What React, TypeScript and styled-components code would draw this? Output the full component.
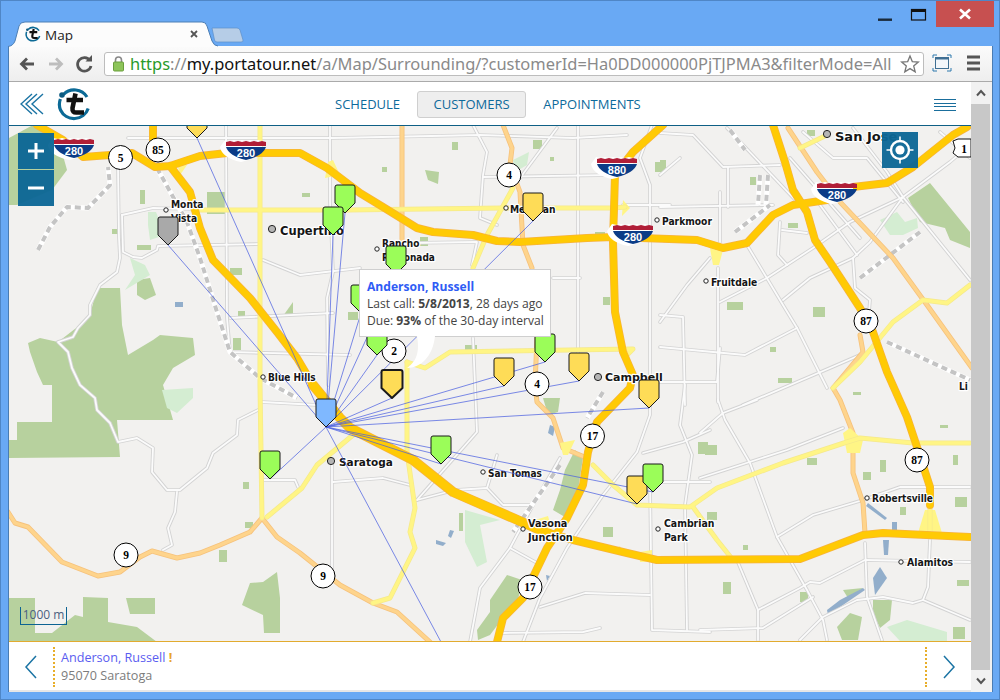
import React from "react";
import styled, { createGlobalStyle } from "styled-components";

const Global = createGlobalStyle`
  html, body { margin: 0; padding: 0; background: #69a9f4; }
  body { width: 1000px; height: 700px; overflow: hidden; font-family: "Open Sans", "Liberation Sans", sans-serif; }
`;

const Win = styled.div`
  width: 1000px; height: 700px; box-sizing: border-box; background: #69a9f4;
  border: 1px solid #4f86c6; display: flex; flex-direction: column; position: relative;
  padding: 0 6px 7px 7px;
`;
const TabStrip = styled.div`
  height: 45px; flex: none; display: flex; align-items: flex-end; position: relative;
`;
const TabShape = styled.svg`width: 245px; height: 26px; display: block; flex: none; margin-bottom: -1px;`;
const TabLabel = styled.text`font: 13.5px "Open Sans", sans-serif; fill: #222;`;

const Browser = styled.div`
  flex: 1; min-height: 0; display: flex; flex-direction: column; background: #fff;
  border-left: 1px solid #4a7cb3; border-right: 1px solid #4a7cb3;
`;
const Toolbar = styled.div`
  height: 36px; box-sizing: border-box; flex: none; display: flex; align-items: center;
  background: linear-gradient(#fbfbfb, #eeeeee); border-bottom: 1px solid #aaa; padding: 0 9px 0 7px;
`;
const NavIcons = styled.svg`width: 88px; height: 24px; flex: none; display: block;`;
const Omnibox = styled.div`
  flex: none; width: 820px; height: 24px; box-sizing: border-box; background: #fff;
  border: 1px solid #bdbdbd; border-radius: 3px; display: flex; align-items: center; padding: 0 3px 0 7px; gap: 5px;
`;
const Lock = styled.svg`width: 13px; height: 17px; flex: none; display: block;`;
const Url = styled.div`
  flex: 1; min-width: 0; font: 16.45px/22px "Noto Sans", sans-serif; white-space: nowrap; overflow: hidden; color: #8a8a8a;
`;
const Scheme = styled.span`color: #2a9a2a;`;
const Host = styled.span`color: #111;`;
const StarIcon = styled.svg`width: 20px; height: 20px; flex: none; display: block;`;
const RightIcons = styled.svg`width: 50px; height: 22px; flex: none; display: block; margin-left: 8px;`;

const PageRow = styled.div`flex: 1; min-height: 0; display: flex;`;
const Content = styled.div`flex: 1; min-width: 0; display: flex; flex-direction: column;`;
const Header = styled.header`
  height: 44px; box-sizing: border-box; flex: none; background: #fff; border-bottom: 1px solid #0e5f85;
  display: flex; align-items: center; position: relative; padding-left: 11px;
`;
const BackChevrons = styled.svg`width: 24px; height: 24px; flex: none; display: block;`;
const Logo = styled.svg`width: 34px; height: 34px; flex: none; display: block; margin-left: 13px;`;
const Nav = styled.nav`
  display: flex; align-items: center; gap: 17px; margin: 1px 0 0 244px; flex: none;
`;
const NavItem = styled.a<{ $on?: boolean }>`
  font: 13px/25px "Open Sans", sans-serif; color: #0d6a9b; height: 25px;
  padding: 0 ${(p) => (p.$on ? "15.5px" : "0")};
  ${(p) => p.$on && "background:#eeeeee; border:1px solid #cfcfcf; border-radius:3px;"}
`;
const Burger = styled.div`
  position: absolute; right: 15px; top: 17px; width: 22px; height: 12px;
  display: flex; flex-direction: column; justify-content: space-between;
`;
const BurgerLine = styled.span`height: 1.4px; background: #1a6e9c; display: block;`;

const MapCanvas = styled.div`flex: 1; min-height: 0; position: relative; overflow: hidden; background: #f2f1ef;`;
const MapArt = styled.svg`display: block; width: 962px; height: 515px;`;
const Park = styled.polygon`fill: #b7d19e;`;
const Pale = styled.polygon`fill: #d4edd2;`;
const Water = styled.polygon`fill: #92aecb;`;
const Interchange = styled.polygon`fill: #fff585;`;
const Lawn = styled.rect`fill: #b7d19e;`;
const Casing = styled.polyline<{ $c: string; $w: number }>`
  fill: none; stroke: ${(p) => p.$c}; stroke-width: ${(p) => p.$w}; stroke-linejoin: round; stroke-linecap: round;
`;
const Rail = styled.polyline<{ $dash?: boolean }>`
  fill: none; stroke: ${(p) => (p.$dash ? "#c4c4c4" : "#fff")}; stroke-width: ${(p) => (p.$dash ? 4 : 5)};
  ${(p) => p.$dash && "stroke-dasharray: 6 4;"} stroke-linejoin: round;
`;
const PlaceLabel = styled.text<{ $s: number; $wide?: boolean }>`
  font: 700 ${(p) => p.$s}px ${(p) => (p.$wide ? '"DejaVu Sans"' : '"DejaVu Sans Condensed", "DejaVu Sans"')}, sans-serif; fill: #151515;
  paint-order: stroke; stroke: #fff; stroke-width: 2.4px; stroke-linejoin: round;
`;
const PlaceDot = styled.circle<{ $big?: boolean }>`
  fill: ${(p) => (p.$big ? "#b5b5b5" : "#fff")}; stroke: #222; stroke-width: 1;
`;
const Link = styled.line`stroke: #4a5ee0; stroke-opacity: .72; stroke-width: 1;`;
const BadgeCircle = styled.circle`fill: #fff; stroke: #000; stroke-width: 1;`;
const BadgeText = styled.text`font: 700 11.5px "Liberation Serif", serif; text-anchor: middle; fill: #000;`;
const ShieldText = styled.text`font: 700 11px "Liberation Sans", sans-serif; text-anchor: middle; fill: #fff;`;
const PinPath = styled.path<{ $fill: string; $sel?: boolean }>`
  fill: ${(p) => p.$fill}; stroke: #1a1a1a; stroke-width: ${(p) => (p.$sel ? 2 : 1)}; stroke-linejoin: round;
`;

const ZoomBox = styled.div`
  position: absolute; left: 9px; top: 7px; width: 36px; display: flex; flex-direction: column; gap: 1px;
`;
const ZoomBtn = styled.div`
  width: 36px; height: 36px; background: rgba(13, 103, 150, .96); color: #fff; display: flex; align-items: center; justify-content: center;
`;
const ZoomGlyph = styled.svg`width: 20px; height: 20px; display: block;`;
const LocateBtn = styled(ZoomBtn)`position: absolute; left: 873px; top: 6px;`;
const LocateGlyph = styled.svg`width: 30px; height: 30px; display: block;`;
const Scale = styled.div`
  position: absolute; left: 11px; top: 481px; width: 45px; height: 17px; border: 1.5px solid #0d6393; border-top: none;
  font: 12px/15px "Open Sans", sans-serif; color: #4b5f80; text-align: center; white-space: nowrap;
`;
const Popup = styled.div`
  position: absolute; left: 350px; top: 143px; width: 192px; height: 68px; box-sizing: border-box; background: #fff;
  border: 1px solid #cfcfcf; padding: 8px 0 0 7px; font: 12.1px/17px "Open Sans", sans-serif; color: #444; white-space: nowrap;
`;
const PopupTitle = styled.div`font-weight: 700; color: #2f5cf5;`;
const PopupTail = styled.svg`position: absolute; left: 45px; top: 66px; width: 40px; height: 36px; display: block;`;
const TailPath = styled.path`fill: #fff;`;

const Footer = styled.footer`
  height: 51px; box-sizing: border-box; flex: none; background: #fff; border-top: 1px solid #e2ab2f; border-bottom: 2px solid #e6e6e6;
  display: flex; align-items: center; padding-top: 1px;
`;
const Arrow = styled.svg`width: 44px; height: 26px; flex: none; display: block;`;
const Divider = styled.div`width: 0; height: 40px; border-left: 2px dotted #e8ae2a; flex: none;`;
const CustomerInfo = styled.div`flex: 1; padding-left: 6px; font: 12.6px/18px "Open Sans", sans-serif; color: #7c7c7c; min-width: 0;`;
const CustomerName = styled.div`color: #5a5cf0;`;
const Bang = styled.span`color: #e8a52a; font-weight: 700;`;

const Scrollbar = styled.div`width: 21px; flex: none; background: #f1f1f1; display: flex; flex-direction: column;`;
const ScrollEnd = styled.div`height: 22px; flex: none; display: flex; align-items: center; justify-content: center; padding-right: 2px;`;
const ScrollThumb = styled.div`flex: 1; background: #c8c8c8; margin-right: 2px;`;
const ScrollArrow = styled.svg`width: 12px; height: 10px; display: block;`;

const ButtonsWrap = styled.div`position: absolute; top: 0; right: 4px; display: flex; align-items: flex-start;`;
const ButtonsGlyph = styled.svg`width: 117px; height: 27px; display: block;`;

const MOTOR = [
  "37,125 63,140 83,157 110,155 132,153 155,167 170,166 200,156 227,153 300,153 327,168 360,193 383,207 417,228 433,232 473,235 497,241 520,242 587,238 613,237 697,240 723,248 747,243 773,215 793,205 827,200 853,187 887,183 913,167 953,135 967,127",
  "170,166 190,192 200,228 213,260 250,298 277,332 297,358 313,385 340,418 350,428 413,460 453,492 513,518 540,530 573,540 627,553 657,560 800,559 863,535 883,533 970,537",
  "663,125 633,152 615,175 613,242 615,312 623,352 633,375 630,388 597,422 588,452 583,485 567,518 547,548 523,598 503,618 497,642",
  "773,125 785,162 793,190 807,212 815,240 830,262 847,288 860,308 873,332 887,372 907,417 917,447 930,487 930,505",
  "153,125 153,140 158,155",
];
const MOTOR_WIDE = "313,385 340,418 350,428 413,460 453,492 513,518 540,530";
const EXPRESS = [
  "402,125 402,240",
  "503,125 512,148 510,165 520,192 523,245 532,268",
  "537,338 535,385 537,402 553,418 563,448 587,458",
  "788,128 817,172 840,202 893,258 927,305 972,368",
  "860,335 863,352 833,388 840,400 853,433 853,473 863,503 865,533",
  "8,512 15,523 28,527 62,562 98,576 120,572 140,557 152,551 177,558 200,553 220,545 250,532 262,518 277,537 300,553 340,585 373,603 397,612 430,642",
];
const ARTERIAL = [
  "260,125 260,385 262,518",
  "193,210 347,210 503,208 613,208 625,207",
  "513,188 487,235 473,268",
  "407,362 407,452 415,508 410,532 415,548 390,598 373,603",
  "407,362 425,368 450,352 633,349 627,355",
  "267,517 302,488 317,465 353,435",
  "593,465 613,485 637,505 690,507 717,488 783,463 847,442 860,438 913,443 970,443",
  "693,507 717,540 733,560",
  "970,285 947,303 923,300 893,322 860,362 833,388",
  "827,135 800,148",
  "930,500 930,533",
];
const INTERCHANGES = [
  "710,248 723,250 719,265 713,265", "623,200 630,208 622,216", "177,163 187,165 180,175", "328,162 333,160 340,175 325,178",
  "843,433 850,428 863,440 860,453 847,453", "925,510 935,510 942,533 918,533", "560,443 575,440 568,455 563,455", "640,552 652,550 652,562 640,562",
  "535,520 548,516 552,530 540,530", "610,552 620,546 624,556",
];
const STREETS = [
  "118,168 119,238 120,258 117,272 100,285 90,305 90,315 78,328 73,337 58,342 68,352 72,368 80,385 95,398 97,410 110,423 118,442 137,438 153,448 152,472 167,490 180,490 207,468 213,453 237,435 238,420 258,410",
  "177,492 175,512 168,528 172,545 163,550",
  "122,215 153,208 193,209", "122,215 123,252 133,257 142,258 157,250 158,246 260,244",
  "128,138 333,138 480,135 573,138 627,135",
  "226,125 227,318 230,352 350,355", "230,318 333,313", "263,260 300,275 360,268",
  "330,125 330,202 333,272 327,298 328,385", "262,402 317,405", "263,480 295,480 298,487",
  "332,462 332,572", "333,482 383,478 410,485",
  "473,125 487,152 483,175 480,218 497,225", "483,177 613,175", "557,128 520,178", "578,125 578,372",
  "407,243 477,242 472,265", "553,278 580,278", "473,338 477,432 417,500", "417,500 455,490 487,488 503,505 533,505", "497,455 487,488",
  "652,125 640,158 650,185 650,415 637,452 603,495 567,548 540,598 523,642",
  "623,205 670,205", "560,458 533,505 510,548 480,588 470,642", "510,548 537,563",
  "650,482 652,630 710,632", "540,607 585,593 650,595", "685,385 680,425 692,455 685,505 687,630", "503,633 583,632 600,628", "643,453 683,442 710,430", "650,482 710,482",
  "660,133 693,135 723,167 780,165", "728,167 728,207", "660,207 773,205", "720,192 720,242", "718,268 718,402",
  "660,315 683,317 685,405", "660,347 745,355 797,328", "660,382 717,382 720,348",
  "747,245 783,305 797,328 827,388", "720,302 767,278 813,248 850,222 903,197 950,162 970,145",
  "783,300 810,278 853,258 870,242 903,197 970,280", "853,258 855,288 870,300 868,325",
  "680,158 660,175", "727,128 800,205", "790,158 860,238", "820,205 857,255", "803,132 833,158 867,158 903,202", "853,128 887,172 903,197", "940,132 970,158",
  "660,322 687,285 710,258", "743,405 830,368 860,355", "780,222 778,255 787,265", "782,230 807,233",
  "700,478 787,450 843,428", "700,433 723,413 757,400", "718,400 725,420 750,463 777,537 807,590 823,620 827,640",
  "737,560 758,610 758,640", "700,630 763,628 813,597", "758,610 800,588 810,582 820,583 865,560 970,562",
  "777,537 813,515 863,500", "865,543 867,597 882,640", "800,640 823,617 857,600 883,597 913,603 923,600 970,620",
  "930,540 928,587 923,600", "863,500 900,487 970,487",
];
const RAILS = [
  "38,250 50,227 67,207 88,208 110,185 108,167",
  "157,168 187,222 200,258 217,312 230,352 260,378 297,398",
  "603,392 587,418", "560,465 513,532",
  "860,278 920,232", "887,342 970,380",
  "730,130 745,150", "760,175 758,205", "768,175 766,205", "735,232 770,205",
];
const PARKS = [
  "9,138 33,125 60,145 67,170 52,190 17,205 9,205",
  "28,343 40,338 58,342 80,325 90,315 97,288 120,288 122,325 128,355 153,340 160,335 193,338 195,355 173,368 163,385 173,420 117,420 120,457 8,458 8,440 17,440 17,422 52,422 52,385 43,385 37,372 30,352",
  "9,598 35,598 35,633 52,633 75,615 83,617 83,597 108,598 108,622 137,627 157,642 9,642",
  "126,598 155,598 155,614 130,614",
  "242,605 250,583 263,582 277,572 280,598 280,633 264,633 263,615",
  "908,198 930,183 970,232 970,248 950,240 945,228 920,222",
  "543,398 560,398 558,412 548,415",
  "575,450 583,458 578,490 570,520 553,510 560,490 565,470",
  "507,575 522,580 518,600 505,615 490,635 478,640 477,630 490,612 490,600",
  "837,627 850,613 862,617 858,640 842,640",
  "873,600 892,600 890,620 880,628 873,613",
  "843,590 863,588 848,598",
  "425,170 439,172 438,184 428,180",
  "137,280 150,278 156,295 145,300 137,295",
  "283,316 293,302 293,316",
];
const PALES = [
  "162,390 193,388 193,398 177,413 167,408",
  "148,212 156,212 165,235 150,240 148,225",
  "130,258 145,265 150,275 125,290 135,275",
  "465,510 500,520 480,525 487,562 477,567 465,542",
  "880,220 897,212 905,222 917,218 918,228 903,235 890,235",
  "887,627 907,620 947,632 947,641 900,641",
  "513,160 529,152 527,165 515,172",
];
const WATERS = [
  "827,610 840,600 863,588 865,590 843,605 828,615",
  "873,578 880,567 887,578 875,595",
  "883,540 889,540 888,555 884,555", "892,522 897,522 897,534 892,534",
  "868,503 887,518 885,520 866,506",
  "550,425 555,427 553,436 548,433", "450,530 454,531 451,538 448,536", "436,540 446,543 443,546 436,544", "546,575 550,576 547,581", "175,302 183,302 183,307 175,307",
];
const LAWNS: [number, number, number, number][] = [
  [140,190,5,14],[207,192,18,22],[112,229,8,5],[137,245,14,5],[230,268,12,7],[238,311,7,5],[233,338,8,12],[302,193,8,4],
  [382,167,5,5],[452,142,6,8],[533,140,9,9],[550,157,4,4],[655,162,10,10],[420,237,8,9],[603,297,7,8],[348,312,10,8],[595,232,10,3],
  [807,130,8,6],[660,160,6,8],[750,177,6,8],[788,223,10,5],[727,302,16,8],[813,307,12,10],[770,347,6,5],[778,378,14,5],[853,392,8,3],
  [603,527,10,10],[459,513,4,18],[698,442,10,12],[953,627,12,12],[957,580,12,6],[955,497,12,10],[880,460,6,12],[863,472,8,8],[953,455,5,10],[940,425,8,3],
  [807,458,10,7],[705,445,12,10],[707,512,10,8],[743,545,5,5],[723,582,8,12],[800,592,8,10],[900,507,6,8],[219,550,8,12],[243,482,6,7],[245,522,8,6],
  [465,345,12,8],
];
type Place = { t: string[]; x: number; y: number; s: number; dx: number; dy: number; big?: boolean; wide?: boolean };
const PLACES: Place[] = [
  { t: ["Monta", "Vista"], x: 171, y: 208, s: 10.2, dx: 166, dy: 210 },
  { t: ["Cupertino"], x: 280, y: 235, s: 11.5, dx: 272, dy: 229, big: true, wide: true },
  { t: ["Rancho", "Rinconada"], x: 382, y: 247, s: 10, dx: 377, dy: 249 },
  { t: ["Blue Hills"], x: 268, y: 381, s: 10, dx: 263, dy: 377 },
  { t: ["Saratoga"], x: 339, y: 466, s: 10.5, dx: 331, dy: 461, big: true, wide: true },
  { t: ["Meridian"], x: 510, y: 213, s: 10.2, dx: 506, dy: 208 },
  { t: ["Parkmoor"], x: 662, y: 225, s: 10.2, dx: 657, dy: 220 },
  { t: ["Fruitdale"], x: 711, y: 286, s: 10.2, dx: 706, dy: 281 },
  { t: ["Campbell"], x: 605, y: 381, s: 11, dx: 598, dy: 377, big: true, wide: true },
  { t: ["San Tomas"], x: 488, y: 477, s: 10, dx: 483, dy: 472 },
  { t: ["Vasona", "Junction"], x: 528, y: 527, s: 10.8, dx: 523, dy: 529 },
  { t: ["Cambrian", "Park"], x: 664, y: 527, s: 10.4, dx: 658, dy: 529 },
  { t: ["Robertsville"], x: 872, y: 502, s: 10, dx: 867, dy: 498 },
  { t: ["Alamitos"], x: 907, y: 566, s: 10.4, dx: 901, dy: 562 },
  { t: ["Li"], x: 959, y: 390, s: 10, dx: 1000, dy: 390 },
  { t: ["San Jose"], x: 835, y: 141, s: 13, dx: 827, dy: 134, big: true, wide: true },
];
const BADGES: [number, number, string][] = [
  [120.5,157.5,"5"],[158,150,"85"],[509,175,"4"],[394,351,"2"],[537,384,"4"],[592.5,436,"17"],[866,321,"87"],[917,460,"87"],[530,587,"17"],[126,555,"9"],[323,576,"9"],
];
const SHIELDS: [number, number, string][] = [[74,148,"280"],[246,150,"280"],[617,167,"880"],[633,234,"280"],[837,192,"280"]];
const GREEN = "#9bfd59", YELLOW = "#fedc57";
const PINS: [number, number, string][] = [
  [168,245,"#a9a9a9"],[197,138,YELLOW],[345,213,GREEN],[333,235,GREEN],[396,274,GREEN],[361,313,GREEN],[377,355,GREEN],[545,362,GREEN],
  [504,386,YELLOW],[579,381,YELLOW],[533,221,YELLOW],[441,464,GREEN],[649,408,YELLOW],[637,504,YELLOW],[653,492,GREEN],[270,479,GREEN],
];
const HUB = { x: 326, y: 427 };

const pinD = (x: number, y: number, w = 10, h = 28) =>
  `M${x - w + 2} ${y - h} h${2 * w - 4} q2 0 2 2 v${h - 12} l${-w} 10 l${-w} -10 v${-(h - 12)} q0 -2 2 -2 z`;

const Shield = ({ x, y, n }: { x: number; y: number; n: string }) => (
  <g transform={`translate(${x} ${y})`}>
    <path d="M-21 -10 l5 1 4 -1 4 1 4 -1 4 1 4 -1 4 1 4 -1 4 1 v6 q-2 11 -21 15 q-19 -4 -21 -15 z" fill="#fff" />
    <path d="M-20 -8 l4 -1 4 1 4 -1 4 1 4 -1 4 1 4 -1 4 1 4 -1 4 1 v4 h-40 z" fill="#b01e37" />
    <path d="M-20 -3 h40 q-3 9 -20 13 q-17 -4 -20 -13 z" fill="#0b3c87" />
    <ShieldText x={0} y={7}>{n}</ShieldText>
  </g>
);

const LogoMark = () => (
  <>
    <path d="M6.5 7.5 A15 15 0 0 1 30 10 M31.2 21.5 A15 15 0 0 1 3.5 23 A15 15 0 0 1 3.4 12" fill="none" stroke="#0c6a96" strokeWidth="3.2" />
    <circle cx="5" cy="8" r="2.8" fill="#0c5a80" />
    <path d="M9 12.5 H30" stroke="#111" strokeWidth="0" />
    <path d="M9.5 13 H26 M18.5 6.5 L15.5 21 Q15 26 20 25.5 H27" fill="none" stroke="#111" strokeWidth="4.6" strokeLinejoin="round" />
  </>
);

const MapDrawing = () => (
  <MapArt viewBox="9 126 962 515">
    {PARKS.map((p) => <Park key={p} points={p} />)}
    {PALES.map((p) => <Pale key={p} points={p} />)}
    {LAWNS.map(([x, y, w, h], i) => <Lawn key={i} x={x} y={y} width={w} height={h} />)}
    {WATERS.map((p) => <Water key={p} points={p} />)}
    {STREETS.map((p) => <Casing key={p} points={p} $c="#d3d3d3" $w={3.6} />)}
    {STREETS.map((p) => <Casing key={p} points={p} $c="#fbfbfb" $w={1.8} />)}
    {RAILS.map((p) => <Rail key={p} points={p} />)}
    {RAILS.map((p) => <Rail key={p} points={p} $dash />)}
    {EXPRESS.map((p) => <Casing key={p} points={p} $c="#f6c27c" $w={5} />)}
    {EXPRESS.map((p) => <Casing key={p} points={p} $c="#fed48c" $w={3.4} />)}
    {INTERCHANGES.map((p) => <Interchange key={p} points={p} />)}
    {ARTERIAL.map((p) => <Casing key={p} points={p} $c="#f5e98c" $w={5} />)}
    {ARTERIAL.map((p) => <Casing key={p} points={p} $c="#fff585" $w={3.6} />)}
    {MOTOR.map((p) => <Casing key={p} points={p} $c="#f7b33c" $w={8} />)}
    <Casing points={MOTOR_WIDE} $c="#f7b33c" $w={10} />
    {MOTOR.map((p) => <Casing key={p} points={p} $c="#ffca04" $w={6.6} />)}
    <Casing points={MOTOR_WIDE} $c="#ffca04" $w={8.6} />
    {SHIELDS.map(([x, y, n]) => <Shield key={`${x}`} x={x} y={y} n={n} />)}
    <path d="M953 141 l5 -2 h13 v18 h-13 l-5 -4 l2 -5 z" fill="#fff" stroke="#111" strokeWidth="1" />
    <BadgeText x={964} y={153}>1</BadgeText>
    {PLACES.map((p) => (
      <g key={p.t[0]}>
        <PlaceDot cx={p.dx} cy={p.dy} r={p.big ? 3.6 : 2.2} $big={p.big} />
        {p.t.map((line, i) => <PlaceLabel key={line} x={p.x} y={p.y + i * 14} $s={p.s} $wide={p.wide}>{line}</PlaceLabel>)}
      </g>
    ))}
    {PINS.map(([x, y]) => <Link key={`${x}-${y}`} x1={HUB.x} y1={HUB.y} x2={x} y2={y} />)}
    <Link x1={HUB.x} y1={HUB.y} x2={392} y2={398} />
    <Link x1={HUB.x} y1={HUB.y} x2={441} y2={642} />
    {BADGES.map(([x, y, n]) => (
      <g key={`${x}-${y}`}>
        <BadgeCircle cx={x} cy={y} r={12} />
        <BadgeText x={x} y={y + 4}>{n}</BadgeText>
      </g>
    ))}
    {PINS.map(([x, y, c]) => <PinPath key={`${x}-${y}`} d={pinD(x, y)} $fill={c} />)}
    <PinPath d={pinD(392, 398, 10.5, 28)} $fill={YELLOW} $sel />
    <PinPath d={pinD(326, 427)} $fill="#7fb8ff" />
  </MapArt>
);

function WindowButtons() {
  return (
    <ButtonsWrap>
      <ButtonsGlyph viewBox="0 0 117 27">
        <rect x="0" y="17.5" width="14" height="2.4" fill="#1a2a3a" />
        <rect x="33.5" y="8.5" width="14" height="10.5" fill="none" stroke="#111" strokeWidth="1.2" />
        <rect x="33" y="8" width="15" height="3" fill="#111" />
        <rect x="58" y="0" width="58" height="26" fill="#c75050" />
        <path d="M82 8.5 L92 17.5 M92 8.5 L82 17.5" stroke="#fff" strokeWidth="2.6" />
      </ButtonsGlyph>
    </ButtonsWrap>
  );
}

export default function App() {
  return (
    <>
      <Global />
      <Win>
        <TabStrip>
          <TabShape viewBox="0 0 245 26">
            <path d="M0 26 Q5 25 7 20 L11 5 Q12 1 17 1 H194 Q198 1 199 5 L204 20 Q206 25 210 25 L245 25 V26 Z" fill="#fcfcfc" />
            <path d="M0 25.5 Q5 25 7 20 L11 5 Q12 1 17 1 H194 Q198 1 199 5 L204 20 Q206 25 210 25" fill="none" stroke="#4d7fb5" strokeWidth="1" />
            <path d="M204 7 h25 q2 0 3 2 l3 10 q.5 2 -2 2 h-24 q-2 0 -2.5 -2 z" fill="#b6cde7" stroke="#5d8fc8" strokeWidth=".7" />
            <svg x="17" y="5" width="16" height="16" viewBox="0 0 34 34"><LogoMark /></svg>
            <TabLabel x={37} y={19}>Map</TabLabel>
            <path d="M183 10 l6 6 M189 10 l-6 6" stroke="#555" strokeWidth="1.8" />
          </TabShape>
        </TabStrip>
        <Browser>
          <Toolbar>
            <NavIcons viewBox="0 0 88 24">
              <path d="M18 12 H6 M11 6.5 L5.5 12 L11 17.5" fill="none" stroke="#555" strokeWidth="2.8" />
              <path d="M33 12 H45 M40 6.5 L45.5 12 L40 17.5" fill="none" stroke="#bdbdbd" strokeWidth="2.8" />
              <path d="M74 8.5 A6.8 6.8 0 1 0 75 14" fill="none" stroke="#555" strokeWidth="2.8" />
              <path d="M69.5 9.5 H76 V3 Z" fill="#555" />
            </NavIcons>
            <Omnibox>
              <Lock viewBox="0 0 13 17">
                <path d="M3.5 7 V5 a3 3 0 0 1 6 0 V7" fill="none" stroke="#888" strokeWidth="1.6" />
                <rect x="1.5" y="7" width="10" height="9" rx="1" fill="#8dc45a" stroke="#6a9f3d" />
              </Lock>
              <Url>
                <Scheme>https</Scheme>://<Host>my.portatour.net</Host>/a/Map/Surrounding/?customerId=Ha0DD000000PjTJPMA3&amp;filterMode=All
              </Url>
              <StarIcon viewBox="0 0 20 20">
                <path d="M10 2 L12.3 7.6 L18.3 8 L13.7 11.9 L15.2 17.8 L10 14.6 L4.8 17.8 L6.3 11.9 L1.7 8 L7.7 7.6 Z" fill="#fff" stroke="#777" strokeWidth="1.3" />
              </StarIcon>
            </Omnibox>
            <RightIcons viewBox="0 0 50 22">
              <path d="M1 5 V2 H5 M15 2 H19 V5 M19 15 V18 H15 M5 18 H1 V15" fill="none" stroke="#2d78ad" strokeWidth="1" />
              <rect x="3.5" y="4.5" width="13" height="11" fill="#f2f6fa" stroke="#3f6f93" />
              <rect x="3.5" y="4.5" width="13" height="2" fill="#3f6f93" />
              <path d="M35 4 h13 M35 10 h13 M35 16 h13" stroke="#555" strokeWidth="3" />
            </RightIcons>
          </Toolbar>
          <PageRow>
            <Content>
              <Header>
                <BackChevrons viewBox="0 0 24 24">
                  <path d="M12 2 L1 12 L12 22 M17 2 L6 12 L17 22 M23 2 L12 12 L23 22" fill="none" stroke="#1b74a4" strokeWidth="1.4" />
                </BackChevrons>
                <Logo viewBox="0 0 34 34"><LogoMark /></Logo>
                <Nav>
                  <NavItem>SCHEDULE</NavItem>
                  <NavItem $on>CUSTOMERS</NavItem>
                  <NavItem>APPOINTMENTS</NavItem>
                </Nav>
                <Burger>
                  <BurgerLine /><BurgerLine /><BurgerLine /><BurgerLine />
                </Burger>
              </Header>
              <MapCanvas>
                <MapDrawing />
                <ZoomBox>
                  <ZoomBtn>
                    <ZoomGlyph viewBox="0 0 20 20"><path d="M10 2 V18 M2 10 H18" stroke="#fff" strokeWidth="3" /></ZoomGlyph>
                  </ZoomBtn>
                  <ZoomBtn>
                    <ZoomGlyph viewBox="0 0 20 20"><path d="M2 10 H18" stroke="#fff" strokeWidth="3" /></ZoomGlyph>
                  </ZoomBtn>
                </ZoomBox>
                <LocateBtn>
                  <LocateGlyph viewBox="0 0 30 30">
                    <circle cx="15" cy="15" r="9" fill="none" stroke="#fff" strokeWidth="2.4" />
                    <circle cx="15" cy="15" r="4.6" fill="#fff" />
                    <path d="M15 1.5 V6 M15 24 V28.5 M1.5 15 H6 M24 15 H28.5" stroke="#fff" strokeWidth="1.6" />
                  </LocateGlyph>
                </LocateBtn>
                <Scale>1000 m</Scale>
                <Popup>
                  <PopupTitle>Anderson, Russell</PopupTitle>
                  <div>Last call: <b>5/8/2013</b>, 28 days ago</div>
                  <div>Due: <b>93%</b> of the 30-day interval</div>
                  <PopupTail viewBox="0 0 40 36">
                    <TailPath d="M12 0 C14 12 14 24 2 32 C16 32 28 20 30 0 Z" />
                  </PopupTail>
                </Popup>
              </MapCanvas>
              <Footer>
                <Arrow viewBox="0 0 44 26">
                  <path d="M27 2 L17 13 L27 24" fill="none" stroke="#1b74a4" strokeWidth="1.5" />
                </Arrow>
                <Divider />
                <CustomerInfo>
                  <CustomerName>Anderson, Russell <Bang>!</Bang></CustomerName>
                  <div>95070 Saratoga</div>
                </CustomerInfo>
                <Divider />
                <Arrow viewBox="0 0 44 26">
                  <path d="M17 2 L27 13 L17 24" fill="none" stroke="#1b74a4" strokeWidth="1.5" />
                </Arrow>
              </Footer>
            </Content>
            <Scrollbar>
              <ScrollEnd><ScrollArrow viewBox="0 0 12 10"><path d="M2 7.5 L6 3 L10 7.5" fill="none" stroke="#555" strokeWidth="2" /></ScrollArrow></ScrollEnd>
              <ScrollThumb />
              <ScrollEnd><ScrollArrow viewBox="0 0 12 10"><path d="M2 2.5 L6 7 L10 2.5" fill="none" stroke="#555" strokeWidth="2" /></ScrollArrow></ScrollEnd>
            </Scrollbar>
          </PageRow>
        </Browser>
        <WindowButtons />
      </Win>
    </>
  );
}
